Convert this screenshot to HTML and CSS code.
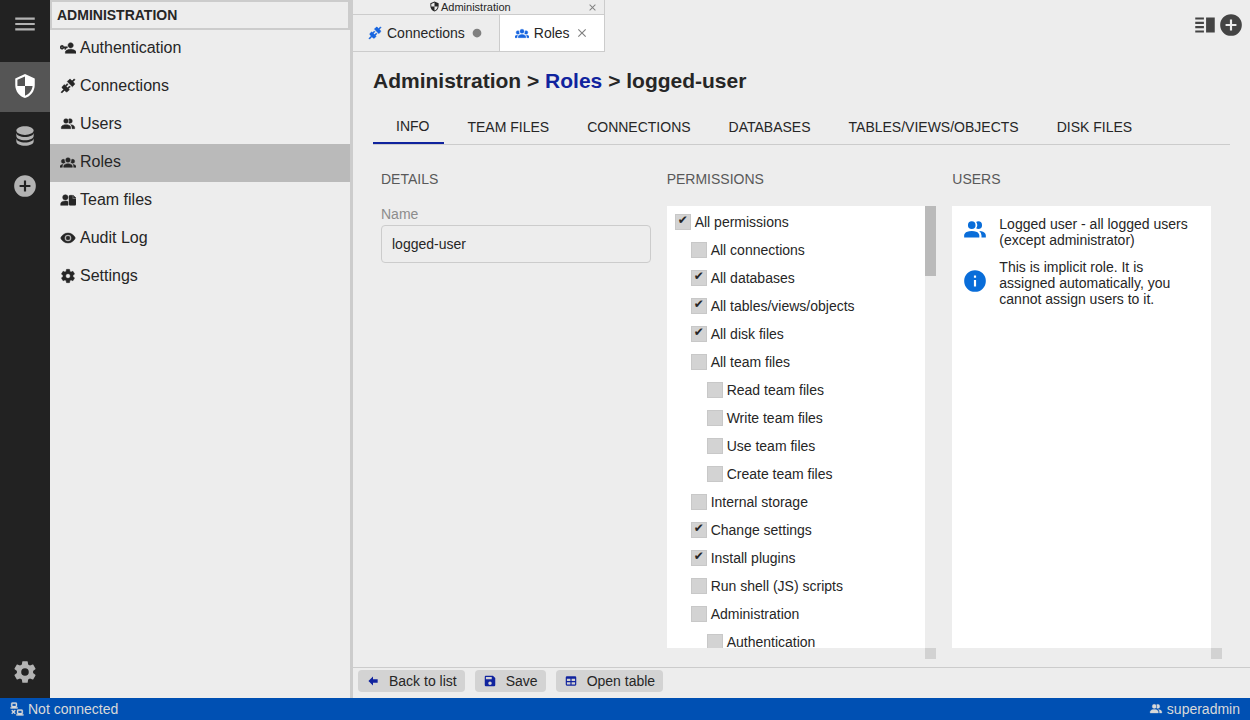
FILE: index.html
```html
<!DOCTYPE html>
<html lang="en">
<head>
<meta charset="utf-8">
<title>Administration - Roles</title>
<link rel="stylesheet" href="styles.css">
</head>
<body>
<svg class="sprite" aria-hidden="true">
  <symbol id="menu" viewBox="0 0 24 24"><path d="M3,6H21V8H3V6M3,11H21V13H3V11M3,16H21V18H3V16Z"/></symbol>
  <symbol id="shield" viewBox="0 0 24 24"><path d="M12,12H19C18.47,16.11 15.72,19.78 12,20.92V12H5V6.3L12,3.19M12,1L3,5V11C3,16.55 6.84,21.73 12,23C17.16,21.73 21,16.55 21,11V5L12,1Z"/></symbol>
  <symbol id="database" viewBox="0 0 24 24"><path d="M12,3C7.58,3 4,4.79 4,7C4,9.21 7.58,11 12,11C16.42,11 20,9.21 20,7C20,4.79 16.42,3 12,3M4,9V12C4,14.21 7.58,16 12,16C16.42,16 20,14.21 20,12V9C20,11.21 16.42,13 12,13C7.58,13 4,11.21 4,9M4,14V17C4,19.21 7.58,21 12,21C16.42,21 20,19.21 20,17V14C20,16.21 16.42,18 12,18C7.58,18 4,16.21 4,14Z"/></symbol>
  <symbol id="plus" viewBox="0 0 24 24"><path d="M17,13H13V17H11V13H7V11H11V7H13V11H17M12,2A10,10 0 0,0 2,12A10,10 0 0,0 12,22A10,10 0 0,0 22,12A10,10 0 0,0 12,2Z"/></symbol>
  <symbol id="cog" viewBox="0 0 24 24"><path d="M12,15.5A3.5,3.5 0 0,1 8.5,12A3.5,3.5 0 0,1 12,8.5A3.5,3.5 0 0,1 15.5,12A3.5,3.5 0 0,1 12,15.5M19.43,12.97C19.47,12.65 19.5,12.33 19.5,12C19.5,11.67 19.47,11.34 19.43,11L21.54,9.37C21.73,9.22 21.78,8.95 21.66,8.73L19.66,5.27C19.54,5.05 19.27,4.96 19.05,5.05L16.56,6.05C16.04,5.66 15.5,5.32 14.87,5.07L14.5,2.42C14.46,2.18 14.25,2 14,2H10C9.75,2 9.54,2.18 9.5,2.42L9.13,5.07C8.5,5.32 7.96,5.66 7.44,6.05L4.95,5.05C4.73,4.96 4.46,5.05 4.34,5.27L2.34,8.73C2.21,8.95 2.27,9.22 2.46,9.37L4.57,11C4.53,11.34 4.5,11.67 4.5,12C4.5,12.33 4.53,12.65 4.57,12.97L2.46,14.63C2.27,14.78 2.21,15.05 2.34,15.27L4.34,18.73C4.46,18.95 4.73,19.03 4.95,18.95L7.44,17.94C7.96,18.34 8.5,18.68 9.13,18.93L9.5,21.58C9.54,21.82 9.75,22 10,22H14C14.25,22 14.46,21.82 14.5,21.58L14.87,18.93C15.5,18.67 16.04,18.34 16.56,17.94L19.05,18.95C19.27,19.03 19.54,18.95 19.66,18.73L21.66,15.27C21.78,15.05 21.73,14.78 21.54,14.63L19.43,12.97Z"/></symbol>
  <symbol id="users" viewBox="0 0 24 24"><path d="M16 17V19H2V17S2 13 9 13 16 17 16 17M12.5 7.5A3.5 3.5 0 1 0 9 11A3.5 3.5 0 0 0 12.5 7.5M15.94 13A5.32 5.32 0 0 1 18 17V19H22V17S22 13.37 15.94 13M15 4A3.39 3.39 0 0 0 13.07 4.59A5 5 0 0 1 13.07 10.41A3.39 3.39 0 0 0 15 11A3.5 3.5 0 0 0 15 4Z"/></symbol>
  <symbol id="group" viewBox="0 0 24 24"><path d="M12,5.5A3.5,3.5 0 0,1 15.5,9A3.5,3.5 0 0,1 12,12.5A3.5,3.5 0 0,1 8.5,9A3.5,3.5 0 0,1 12,5.5M5,8C5.56,8 6.08,8.15 6.53,8.42C6.38,9.85 6.8,11.27 7.66,12.38C7.16,13.34 6.16,14 5,14A3,3 0 0,1 2,11A3,3 0 0,1 5,8M19,8A3,3 0 0,1 22,11A3,3 0 0,1 19,14C17.84,14 16.84,13.34 16.34,12.38C17.2,11.27 17.62,9.85 17.47,8.42C17.92,8.15 18.44,8 19,8M5.5,18.25C5.5,16.18 8.41,14.5 12,14.5C15.59,14.5 18.5,16.18 18.5,18.25V20H5.5V18.25M0,20V18.5C0,17.11 1.89,15.94 4.45,15.6C3.86,16.28 3.5,17.22 3.5,18.25V20H0M24,20H20.5V18.25C20.5,17.22 20.14,16.28 19.55,15.6C22.11,15.94 24,17.11 24,18.5V20Z"/></symbol>
  <symbol id="userkey" viewBox="0 0 24 24"><path d="M11 10V12H9V14H7V12H5.8C5.4 13.2 4.3 14 3 14C1.3 14 0 12.7 0 11S1.3 8 3 8C4.3 8 5.4 8.8 5.8 10H11M3 10C2.4 10 2 10.4 2 11S2.4 12 3 12 4 11.6 4 11 3.6 10 3 10M16 14C18.7 14 24 15.3 24 18V20H8V18C8 15.3 13.3 14 16 14M16 12C13.8 12 12 10.2 12 8S13.8 4 16 4 20 5.8 20 8 18.2 12 16 12Z"/></symbol>
  <symbol id="connection" viewBox="0 0 24 24"><path d="M21.4 7.5C22.2 8.3 22.2 9.6 21.4 10.3L18.6 13.1L10.8 5.3L13.6 2.5C14.4 1.7 15.7 1.7 16.4 2.5L18.2 4.3L21.2 1.3L22.6 2.7L19.6 5.7L21.4 7.5M15.6 13.3L14.2 11.9L11.4 14.7L9.3 12.6L12.1 9.8L10.7 8.4L7.9 11.2L6.4 9.8L3.6 12.6C2.8 13.4 2.8 14.7 3.6 15.4L5.4 17.2L1.4 21.2L2.8 22.6L6.8 18.6L8.6 20.4C9.4 21.2 10.7 21.2 11.4 20.4L14.2 17.6L12.8 16.2L15.6 13.3Z"/></symbol>
  <symbol id="userfile" viewBox="0 0 24 24"><path d="M8 4A4 4 0 1 1 8 12A4 4 0 1 1 8 4M8 13.5C9.4 13.5 10.8 13.7 12 14.2V20H1V17.5C1 15 4.5 13.5 8 13.5M15 5H19V10H24V18.5A1.5 1.5 0 0 1 22.5 20H15A1.5 1.5 0 0 1 13.5 18.5V6.500A1.5 1.5 0 0 1 15 5M20 5L24 9H20Z"/></symbol>
  <symbol id="eye" viewBox="0 0 24 24"><path d="M12,9A3,3 0 0,0 9,12A3,3 0 0,0 12,15A3,3 0 0,0 15,12A3,3 0 0,0 12,9M12,17A5,5 0 0,1 7,12A5,5 0 0,1 12,7A5,5 0 0,1 17,12A5,5 0 0,1 12,17M12,4.5C7,4.5 2.73,7.61 1,12C2.73,16.39 7,19.5 12,19.5C17,19.5 21.27,16.39 23,12C21.27,7.61 17,4.5 12,4.5Z"/></symbol>
  <symbol id="close" viewBox="0 0 24 24"><path d="M19,6.41L17.59,5L12,10.59L6.41,5L5,6.41L10.59,12L5,17.59L6.41,19L12,13.41L17.59,19L19,17.59L13.41,12L19,6.41Z"/></symbol>
  <symbol id="dot" viewBox="0 0 24 24"><circle cx="12" cy="12" r="7.5"/></symbol>
  <symbol id="split" viewBox="0 0 24 24"><path d="M13 5H21V19H13ZM3 5H11V7H3ZM3 9H11V11H3ZM3 13H11V15H3ZM3 17H11V19H3Z"/></symbol>
  <symbol id="info" viewBox="0 0 24 24"><path d="M13,9H11V7H13M13,17H11V11H13M12,2A10,10 0 0,0 2,12A10,10 0 0,0 12,22A10,10 0 0,0 22,12A10,10 0 0,0 12,2Z"/></symbol>
  <symbol id="back" viewBox="0 0 24 24"><path d="M20,9V15H12V19.84L4.16,12L12,4.16V9H20Z"/></symbol>
  <symbol id="save" viewBox="0 0 24 24"><path d="M15,9H5V5H15M12,19A3,3 0 0,1 9,16A3,3 0 0,1 12,13A3,3 0 0,1 15,16A3,3 0 0,1 12,19M17,3H5C3.89,3 3,3.9 3,5V19A2,2 0 0,0 5,21H19A2,2 0 0,0 21,19V7L17,3Z"/></symbol>
  <symbol id="table" viewBox="0 0 24 24"><path d="M5,4H19A2,2 0 0,1 21,6V18A2,2 0 0,1 19,20H5A2,2 0 0,1 3,18V6A2,2 0 0,1 5,4M5,8V12H11V8H5M13,8V12H19V8H13M5,14V18H11V14H5M13,14V18H19V14H13Z"/></symbol>
  <symbol id="lan" viewBox="0 0 24 24"><path d="M4,1C2.89,1 2,1.89 2,3V7C2,8.11 2.89,9 4,9H1V11H13V9H10C11.11,9 12,8.11 12,7V3C12,1.89 11.11,1 10,1H4M4,3H10V7H4V3M14,13C12.89,13 12,13.89 12,15V19C12,20.11 12.89,21 14,21H11V23H23V21H20C21.11,21 22,20.11 22,19V15C22,13.89 21.11,13 20,13H14M3.88,13.46L2.46,14.88L4.59,17L2.46,19.12L3.88,20.54L6,18.41L8.12,20.54L9.54,19.12L7.41,17L9.54,14.88L8.12,13.46L6,15.59L3.88,13.46M14,15H20V19H14V15Z"/></symbol>
</svg>

<div class="workspace">
  <nav class="iconbar" aria-label="Widgets">
    <button class="iconbar-item menu-item" aria-label="Menu"><svg class="icon-l"><use href="#menu"/></svg></button>
    <button class="iconbar-item active" aria-label="Administration"><svg class="icon-l"><use href="#shield"/></svg></button>
    <button class="iconbar-item" aria-label="Databases"><svg class="icon-l"><use href="#database"/></svg></button>
    <button class="iconbar-item" aria-label="Add"><svg class="icon-l"><use href="#plus"/></svg></button>
    <button class="iconbar-item last" aria-label="Settings"><svg class="icon-l"><use href="#cog"/></svg></button>
  </nav>

  <aside class="sidebar">
    <h2 class="sidebar-title">Administration</h2>
    <a class="side-link" href="#"><svg class="icon-m"><use href="#userkey"/></svg>Authentication</a>
    <a class="side-link" href="#"><svg class="icon-m"><use href="#connection"/></svg>Connections</a>
    <a class="side-link" href="#"><svg class="icon-m"><use href="#users"/></svg>Users</a>
    <a class="side-link selected" href="#"><svg class="icon-m"><use href="#group"/></svg>Roles</a>
    <a class="side-link" href="#"><svg class="icon-m"><use href="#userfile"/></svg>Team files</a>
    <a class="side-link" href="#"><svg class="icon-m"><use href="#eye"/></svg>Audit Log</a>
    <a class="side-link" href="#"><svg class="icon-m"><use href="#cog"/></svg>Settings</a>
  </aside>

  <main class="main">
    <header class="topbar">
      <div class="tabgroup">
        <div class="tabgroup-title">
          <span class="tabgroup-name"><svg class="icon-xs"><use href="#shield"/></svg>Administration</span>
          <button class="close" aria-label="Close group"><svg class="icon-xs"><use href="#close"/></svg></button>
        </div>
        <div class="filetabs">
          <div class="filetab"><svg class="icon-s blue"><use href="#connection"/></svg>Connections<button class="close" aria-label="Close Connections"><svg class="icon-s"><use href="#dot"/></svg></button></div>
          <div class="filetab current"><svg class="icon-s blue"><use href="#group"/></svg>Roles<button class="close" aria-label="Close Roles"><svg class="icon-s"><use href="#close"/></svg></button></div>
        </div>
      </div>
      <div class="topbar-actions">
        <button class="plain" aria-label="Split view"><svg class="icon-l"><use href="#split"/></svg></button>
        <button class="plain" aria-label="New"><svg class="icon-l"><use href="#plus"/></svg></button>
      </div>
    </header>

    <section class="page">
      <h1 class="crumbs">Administration &gt; <a class="crumb-link" href="#">Roles</a> &gt; logged-user</h1>
      <div class="tabs" role="tablist">
        <button class="tab on" role="tab" aria-selected="true">INFO</button>
        <button class="tab" role="tab">TEAM FILES</button>
        <button class="tab" role="tab">CONNECTIONS</button>
        <button class="tab" role="tab">DATABASES</button>
        <button class="tab" role="tab">TABLES/VIEWS/OBJECTS</button>
        <button class="tab" role="tab">DISK FILES</button>
      </div>
      <div class="columns">
        <section class="column">
          <h3 class="column-title">DETAILS</h3>
          <label class="field-label" for="name">Name</label>
          <input class="field" id="name" type="text" value="logged-user">
        </section>
        <section class="column">
          <h3 class="column-title">PERMISSIONS</h3>
          <div class="scrollbox">
            <div class="view permissions">
              <label class="perm"><input class="check" type="checkbox" checked>All permissions</label>
              <label class="perm level1"><input class="check" type="checkbox">All connections</label>
              <label class="perm level1"><input class="check" type="checkbox" checked>All databases</label>
              <label class="perm level1"><input class="check" type="checkbox" checked>All tables/views/objects</label>
              <label class="perm level1"><input class="check" type="checkbox" checked>All disk files</label>
              <label class="perm level1"><input class="check" type="checkbox">All team files</label>
              <label class="perm level2"><input class="check" type="checkbox">Read team files</label>
              <label class="perm level2"><input class="check" type="checkbox">Write team files</label>
              <label class="perm level2"><input class="check" type="checkbox">Use team files</label>
              <label class="perm level2"><input class="check" type="checkbox">Create team files</label>
              <label class="perm level1"><input class="check" type="checkbox">Internal storage</label>
              <label class="perm level1"><input class="check" type="checkbox" checked>Change settings</label>
              <label class="perm level1"><input class="check" type="checkbox" checked>Install plugins</label>
              <label class="perm level1"><input class="check" type="checkbox">Run shell (JS) scripts</label>
              <label class="perm level1"><input class="check" type="checkbox">Administration</label>
              <label class="perm level2"><input class="check" type="checkbox">Authentication</label>
            </div>
            <div class="track"><div class="thumb"></div></div>
            <div class="corner"></div>
          </div>
        </section>
        <section class="column">
          <h3 class="column-title">USERS</h3>
          <div class="scrollbox">
            <div class="view">
              <div class="note"><svg class="icon-l"><use href="#users"/></svg><p class="note-text">Logged user - all logged users (except administrator)</p></div>
              <div class="note"><svg class="icon-l"><use href="#info"/></svg><p class="note-text">This is implicit role. It is assigned automatically, you cannot assign users to it.</p></div>
            </div>
            <div class="track"></div>
            <div class="corner"></div>
          </div>
        </section>
      </div>
    </section>

    <footer class="toolbar">
      <button class="tool"><svg class="icon-s"><use href="#back"/></svg>Back to list</button>
      <button class="tool"><svg class="icon-s"><use href="#save"/></svg>Save</button>
      <button class="tool"><svg class="icon-s"><use href="#table"/></svg>Open table</button>
    </footer>
  </main>
</div>

<div class="statusbar">
  <span class="status"><svg class="icon-s"><use href="#lan"/></svg>Not connected</span>
  <span class="status"><svg class="icon-s"><use href="#users"/></svg>superadmin</span>
</div>
</body>
</html>
```
FILE: styles.css
```css
* { box-sizing: border-box; }

body {
  margin: 0;
  height: 100vh;
  display: flex;
  flex-direction: column;
  overflow: hidden;
  background: #ededed;
  color: #262626;
  font: 14px/16px "Liberation Sans", Arial, sans-serif;
}

h1, h2, h3, p { margin: 0; }
a { color: inherit; text-decoration: none; }

button {
  border: 0;
  padding: 0;
  background: none;
  color: inherit;
  font: inherit;
  cursor: pointer;
}

svg { display: block; flex: none; fill: currentColor; }
.sprite { position: absolute; width: 0; height: 0; }
.icon-xs { width: 11px; height: 11px; }
.icon-s { width: 14px; height: 14px; }
.icon-m { width: 16px; height: 16px; stroke: currentColor; stroke-width: 0.7; }
.icon-l { width: 26px; height: 26px; }
.blue { color: #1765e0; stroke: currentColor; stroke-width: 0.7; }

.workspace { flex: 1; min-height: 0; display: flex; }

/* Widget icon bar */
.iconbar {
  width: 50px;
  display: flex;
  flex-direction: column;
  background: #222;
  color: #b3b3b3;
}
.iconbar-item {
  height: 50px;
  padding-bottom: 2px;
  display: flex;
  align-items: center;
  justify-content: center;
}
.menu-item { height: 50px; margin-bottom: 12px; }
.iconbar-item.active { background: #555; color: #fff; }
.iconbar-item.last { margin-top: auto; }

/* Side panel */
.sidebar {
  width: 303px;
  flex: none;
  border-right: 3px solid #ccc;
}
.sidebar-title {
  border: 2px solid #ccc;
  padding: 5px;
  font-size: 14px;
  line-height: 16px;
  text-transform: uppercase;
}
.side-link {
  height: 38px;
  padding: 0 10px 2px;
  display: flex;
  align-items: center;
  gap: 4px;
  font-size: 16px;
}
.side-link.selected { background: #bababa; }

/* Open file tabs */
.main { flex: 1; min-width: 0; display: flex; flex-direction: column; }
.topbar { display: flex; justify-content: space-between; }
.tabgroup { border-right: 1px solid #ccc; border-bottom: 1px solid #ccc; }
.tabgroup-title {
  height: 15px;
  padding-right: 6px;
  display: flex;
  align-items: center;
  border-bottom: 1px solid #ccc;
  font-size: 11px;
}
.tabgroup-name {
  flex: 1;
  display: flex;
  justify-content: center;
  gap: 1px;
  line-height: 12px;
}
.filetabs { display: flex; height: 36px; }
.filetab {
  padding: 0 15px;
  display: flex;
  align-items: center;
  gap: 5px;
}
.filetab + .filetab { border-left: 1px solid #ccc; }
.filetab.current { background: #fff; }
.close { color: #808080; }
.topbar-actions {
  display: flex;
  align-items: center;
  padding: 0 6px 2px 0;
  color: #444;
}

/* Role page */
.page {
  flex: 1;
  min-height: 0;
  padding: 16px 20px 8px;
  display: flex;
  flex-direction: column;
}
.crumbs { font-size: 21px; line-height: 26px; }
.crumb-link { color: #10239e; }
.tabs {
  height: 37px;
  margin-top: 14px;
  display: flex;
  border-bottom: 1px solid #ccc;
}
.tab { padding: 2px 15px 0 23px; }
.tab.on { border-bottom: 2px solid #10239e; }
.columns {
  flex: 1;
  min-height: 0;
  display: grid;
  grid-template-columns: repeat(3, 1fr);
}
.column {
  min-width: 0;
  min-height: 0;
  padding: 26px 8px 0;
  display: flex;
  flex-direction: column;
}
.column-title {
  margin-bottom: 19px;
  color: #595959;
  font-size: 14px;
  font-weight: normal;
}
.field-label { color: #8c8c8c; margin-bottom: 3px; }
.field {
  width: 100%;
  height: 38px;
  padding: 0 10px;
  border: 1px solid #ccc;
  border-radius: 4px;
  background: transparent;
  color: inherit;
  font: inherit;
}

/* Scrolling panels */
.scrollbox {
  flex: 1;
  min-height: 0;
  display: grid;
  grid-template-columns: 1fr 11px;
  grid-template-rows: minmax(0, 1fr) 11px;
}
.view { background: #fff; overflow: hidden; }
.thumb { height: 70px; background: #bababa; }
.corner { grid-column: 2; background: #d2d2d2; }
.permissions { padding-top: 2px; }
.perm {
  height: 28px;
  padding-left: 8px;
  display: flex;
  align-items: center;
  gap: 4px;
}
.level1 { padding-left: 24px; }
.level2 { padding-left: 40px; }
.check {
  appearance: none;
  flex: none;
  width: 16px;
  height: 16px;
  margin: 0;
  border: 1px solid #c8c8c8;
  background: #d3d3d3;
  color: #262626;
  font: 12px/10px "DejaVu Sans", sans-serif;
  text-align: center;
}
.check:checked::before { content: "✔"; }
.note {
  padding: 10px 12px 0 10px;
  display: flex;
  align-items: center;
  gap: 11px;
}
.note + .note { padding-top: 11px; }
.note .icon-l { color: #096dd9; margin-bottom: 4px; }

/* Bottom bars */
.toolbar {
  height: 31px;
  padding: 2px 5px 6px;
  display: flex;
  gap: 10px;
  border-top: 1px solid #ccc;
}
.tool {
  height: 22px;
  padding: 0 8px;
  display: flex;
  align-items: center;
  gap: 9px;
  border-radius: 4px;
  background: #d3d3d3;
}
.tool .icon-s { color: #10239e; }
.statusbar {
  height: 22px;
  padding: 0 10px;
  display: flex;
  align-items: center;
  justify-content: space-between;
  background: #0050b3;
  color: #d9d9d9;
}
.status { display: flex; align-items: center; gap: 4px; }
.status .icon-s { stroke: currentColor; stroke-width: 0.5; }
```
